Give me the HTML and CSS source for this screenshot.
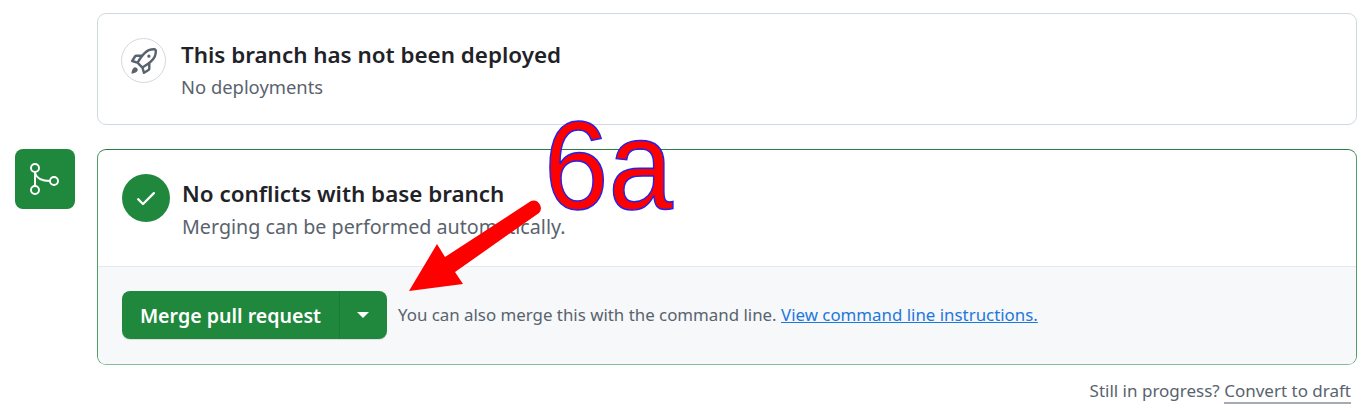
FILE: index.html
```html
<!DOCTYPE html>
<html>
<head>
	<meta charset="utf-8" />
	<title>Merge pull request</title>
	<link rel="stylesheet" href="styles.css">
</head>
<body>
	<div class="timeline">
		<div class="row">
			<div class="badge-slot"></div>
			<div class="card deploy">
				<div class="status">
					<div class="rocket-circle">
						<svg width="26" height="26" viewBox="0 0 16 16" fill="#59636e"><path d="M14.064 0h.186C15.216 0 16 .784 16 1.75v.186a8.752 8.752 0 0 1-2.564 6.186l-.458.459c-.314.314-.641.616-.979.904v3.207c0 .608-.315 1.172-.833 1.49l-2.774 1.707a.749.749 0 0 1-1.11-.418l-.954-3.102a1.214 1.214 0 0 1-.145-.125L3.754 9.816a1.218 1.218 0 0 1-.124-.145L.528 8.717a.749.749 0 0 1-.418-1.11l1.71-2.774A1.748 1.748 0 0 1 3.31 4h3.204c.288-.338.59-.665.904-.979l.459-.458A8.749 8.749 0 0 1 14.064 0ZM8.938 3.623h-.002l-.458.458c-.76.76-1.437 1.598-2.02 2.5l-1.5 2.317 2.143 2.143 2.317-1.5c.902-.583 1.74-1.26 2.499-2.02l.459-.458a7.25 7.25 0 0 0 2.123-5.127V1.75a.25.25 0 0 0-.25-.25h-.186a7.249 7.249 0 0 0-5.125 2.123ZM3.56 14.56c-.732.732-2.334 1.045-3.005 1.148a.234.234 0 0 1-.201-.064.234.234 0 0 1-.064-.201c.103-.671.416-2.273 1.15-3.003a1.502 1.502 0 1 1 2.12 2.12Zm6.94-3.935c-.088.06-.177.118-.266.175l-2.35 1.521.548 1.783 1.949-1.2a.25.25 0 0 0 .119-.213ZM3.678 8.116 5.2 5.766c.058-.09.117-.178.176-.266H3.309a.25.25 0 0 0-.213.119l-1.2 1.95ZM12 5a1 1 0 1 1-2 0 1 1 0 0 1 2 0Z"/></svg>
					</div>
					<div class="status-text">
						<h3>This branch has not been deployed</h3>
						<p class="sub-deploy">No deployments</p>
					</div>
				</div>
			</div>
		</div>
		<div class="row merge-row">
			<div class="badge-slot">
				<div class="merge-badge">
					<svg width="60" height="60" viewBox="0 0 60 60" fill="none" stroke="#fff" stroke-width="1.9"><circle cx="20" cy="19" r="4"/><circle cx="20" cy="41" r="4"/><circle cx="39" cy="32" r="4"/><path d="M20 23V37M20 24C21.500 29 26 32 35 32"/></svg>
				</div>
			</div>
			<div class="card merge">
				<div class="status checks">
					<div class="check-circle">
						<svg width="24" height="24" viewBox="0 0 16 16" fill="#fff"><path d="M13.78 4.22a.75.75 0 0 1 0 1.06l-7.25 7.25a.75.75 0 0 1-1.06 0L2.22 9.28a.751.751 0 0 1 1.06-1.06L6 10.94l6.72-6.72a.75.75 0 0 1 1.06 0Z"/></svg>
					</div>
					<div class="status-text">
						<h3>No conflicts with base branch</h3>
						<p class="sub-merge">Merging can be performed automatically.</p>
					</div>
				</div>
				<div class="actions">
					<div class="btn-group">
						<button class="btn-merge">Merge pull request</button>
						<button class="btn-caret"><span class="caret"></span></button>
					</div>
					<span class="hint">You can also merge this with the command line. <a href="#">View command line instructions.</a></span>
				</div>
			</div>
		</div>
		<div class="draft">Still in progress? <a href="#">Convert to draft</a></div>
	</div>

	<!-- annotation drawn over the screenshot -->
	<div class="note">6a</div>
	<svg class="note-arrow" width="1371" height="416" viewBox="0 0 1371 416" fill="#ff0000">
		<path d="M409 291 L437 244 L445 257 L531 201 A7.5 7.5 0 0 1 539 213 L455 272 L463 284 Z"/>
	</svg>
</body>
</html>
```

FILE: styles.css
```css
html, body {
	margin: 0;
	padding: 0;
	background: #ffffff;
}
body {
	width: 1371px;
	height: 416px;
	overflow: hidden;
	position: relative;
	font-family: 'Noto Sans', sans-serif;
	color: #1f2328;
}
.timeline {
	padding: 13px 14px 0 15px;
}
.row {
	display: flex;
}
.merge-row {
	margin-top: 24px;
}
.badge-slot {
	width: 82px;
	flex: none;
}
.merge-badge {
	width: 60px;
	height: 60px;
	background: #1f883d;
	border-radius: 8px;
}
.merge-badge svg {
	display: block;
}
.card {
	flex: 1;
	box-sizing: border-box;
	border-radius: 9px;
	background: #ffffff;
	overflow: hidden;
}
.deploy {
	height: 112px;
	border: 1px solid #d1d9e0;
	padding: 24px 23px 0;
}
.merge {
	height: 216px;
	border: 1px solid #4f9d68;
	border-top-color: #2d7a45;
	border-bottom-color: #85bd97;
}
.status {
	display: flex;
	align-items: flex-start;
}
.checks {
	height: 116px;
	box-sizing: border-box;
	padding: 24px 24px 0;
}
.rocket-circle {
	width: 45px;
	height: 45px;
	flex: none;
	box-sizing: border-box;
	border: 1px solid #d1d9e0;
	border-radius: 50%;
	display: flex;
	align-items: center;
	justify-content: center;
	margin-right: 15px;
}
.check-circle {
	width: 48px;
	height: 48px;
	flex: none;
	background: #1f883d;
	border-radius: 50%;
	display: flex;
	align-items: center;
	justify-content: center;
	margin-right: 12px;
}
.status-text {
	padding-top: 1px;
}
.checks .status-text {
	padding-top: 4px;
}
.status-text h3 {
	margin: 0;
	font-size: 22.4px;
	font-weight: 600;
	line-height: 32px;
}
.status-text p {
	margin: 0;
	line-height: 32px;
	color: #59636e;
}
.sub-deploy {
	font-size: 18.4px;
}
.sub-merge {
	font-size: 19.7px;
	padding-top: 1px;
}
.actions {
	height: 98px;
	box-sizing: border-box;
	background: #f6f8fa;
	border-top: 1px solid #e5e8ec;
	padding: 24px 24px 0;
	display: flex;
	align-items: flex-start;
}
.btn-group {
	display: flex;
	height: 48px;
	margin-right: 11px;
	border-radius: 8px;
	box-shadow: 0 1px 1px rgba(31, 35, 40, .12);
}
.btn-group button {
	border: 0;
	background: #1f883d;
	color: #ffffff;
	font-family: inherit;
	padding: 0;
}
.btn-merge {
	width: 218px;
	font-size: 19.6px;
	font-weight: 600;
	border-radius: 8px 0 0 8px;
	border-right: 1px solid #1b7a37 !important;
}
.btn-caret {
	width: 47px;
	border-radius: 0 8px 8px 0;
	display: flex;
	align-items: center;
	justify-content: center;
	padding-right: 2px !important;
}
.caret {
	width: 0;
	height: 0;
	border-left: 6px solid transparent;
	border-right: 6px solid transparent;
	border-top: 6px solid #ffffff;
}
.hint {
	font-size: 16.87px;
	line-height: 48px;
	color: #59636e;
}
.hint a {
	color: #1f77dd;
	text-decoration: underline;
}
.draft {
	margin-top: 14px;
	padding-right: 6px;
	text-align: right;
	font-size: 17px;
	line-height: 24px;
	color: #59636e;
}
.draft a {
	color: #59636e;
	text-decoration: none;
	border-bottom: 2px solid #a4abb3;
}
.note {
	position: absolute;
	left: 544px;
	top: 96px;
	font-family: 'Liberation Sans', sans-serif;
	font-size: 126px;
	line-height: 140px;
	color: #ff0000;
	-webkit-text-stroke: 1.5px #2222ee;
	transform: scaleX(.92);
	transform-origin: left top;
}
.note-arrow {
	position: absolute;
	left: 0;
	top: 0;
}
```
